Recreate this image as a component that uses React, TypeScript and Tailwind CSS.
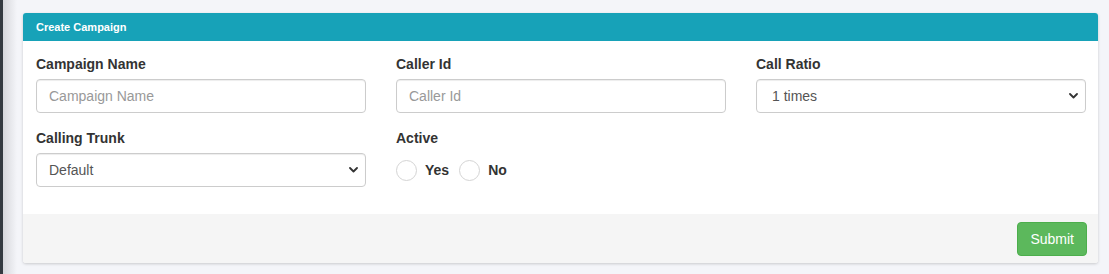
import React from 'react';

const font = { fontFamily: '"Liberation Sans", Arial, sans-serif' };

const Chevron: React.FC = () => (
  <svg
    className="pointer-events-none absolute right-[8px] top-1/2 -translate-y-1/2"
    width="9"
    height="6"
    viewBox="0 0 9 6"
    fill="none"
  >
    <path d="M1 1l3.5 3.5L8 1" stroke="#333" strokeWidth="1.8" strokeLinecap="round" strokeLinejoin="round" />
  </svg>
);

const Field: React.FC<{ label: string; children: React.ReactNode }> = ({ label, children }) => (
  <div className="mb-[15px]">
    <label className="mb-[5px] block text-[14px] leading-[20px] font-bold text-[#333]">{label}</label>
    {children}
  </div>
);

const inputCls =
  'block h-[34px] w-full rounded-[4px] border border-[#ccc] bg-white px-[12px] text-[14px] text-[#555] placeholder:text-[#999] shadow-[inset_0_1px_1px_rgba(0,0,0,0.075)] outline-none';

const Select: React.FC<{ value: string; options: string[]; indent?: boolean }> = ({ value, options, indent }) => (
  <div className="relative">
    <select
      defaultValue={value}
      className={inputCls + (indent ? ' appearance-none pl-[15px] pr-[24px]' : ' appearance-none pl-[12px] pr-[24px]')}
      style={font}
    >
      {options.map((o) => (
        <option key={o}>{o}</option>
      ))}
    </select>
    <Chevron />
  </div>
);

const Radio: React.FC<{ label: string }> = ({ label }) => (
  <label className="flex items-center gap-[8px]">
    <span className="block h-[21px] w-[21px] rounded-full border border-[#d4d4d4] bg-white" />
    <span className="text-[14px] font-bold text-[#333]">{label}</span>
  </label>
);

export default function App() {
  return (
    <div className="flex h-[274px] w-[1109px] overflow-hidden bg-[#f4f5f9]" style={font}>
      <div className="w-[3px] shrink-0 bg-[#343a40]" />
      <main className="flex-1 bg-[linear-gradient(to_right,#d6d7db,#f4f5f9_14px)] pt-[13px] pl-[20px]">
        <div className="w-[1075px] overflow-hidden rounded-[3px] bg-white shadow-[0_1px_3px_rgba(0,0,0,0.18)]">
          <div className="flex h-[28px] items-center bg-[#17a2b8] pl-[13px] text-[11px] font-bold text-white">
            Create Campaign
          </div>
          <div className="grid grid-cols-[330px_330px_330px] gap-x-[30px] pt-[13px] pr-[12px] pb-[12px] pl-[13px]">
            <Field label="Campaign Name">
              <input className={inputCls} placeholder="Campaign Name" style={font} />
            </Field>
            <Field label="Caller Id">
              <input className={inputCls} placeholder="Caller Id" style={font} />
            </Field>
            <Field label="Call Ratio">
              <Select value="1 times" options={['1 times', '2 times', '3 times']} indent />
            </Field>
            <Field label="Calling Trunk">
              <Select value="Default" options={['Default']} />
            </Field>
            <Field label="Active">
              <div className="flex h-[34px] items-center gap-[10px]">
                <Radio label="Yes" />
                <Radio label="No" />
              </div>
            </Field>
          </div>
          <div className="flex h-[49px] items-start justify-end bg-[#f5f5f5] pt-[8px] pr-[11px]">
            <button className="h-[34px] rounded-[4px] border border-[#4cae4c] bg-[#5cb85c] px-[12px] text-[14px] text-white">
              Submit
            </button>
          </div>
        </div>
      </main>
    </div>
  );
}
